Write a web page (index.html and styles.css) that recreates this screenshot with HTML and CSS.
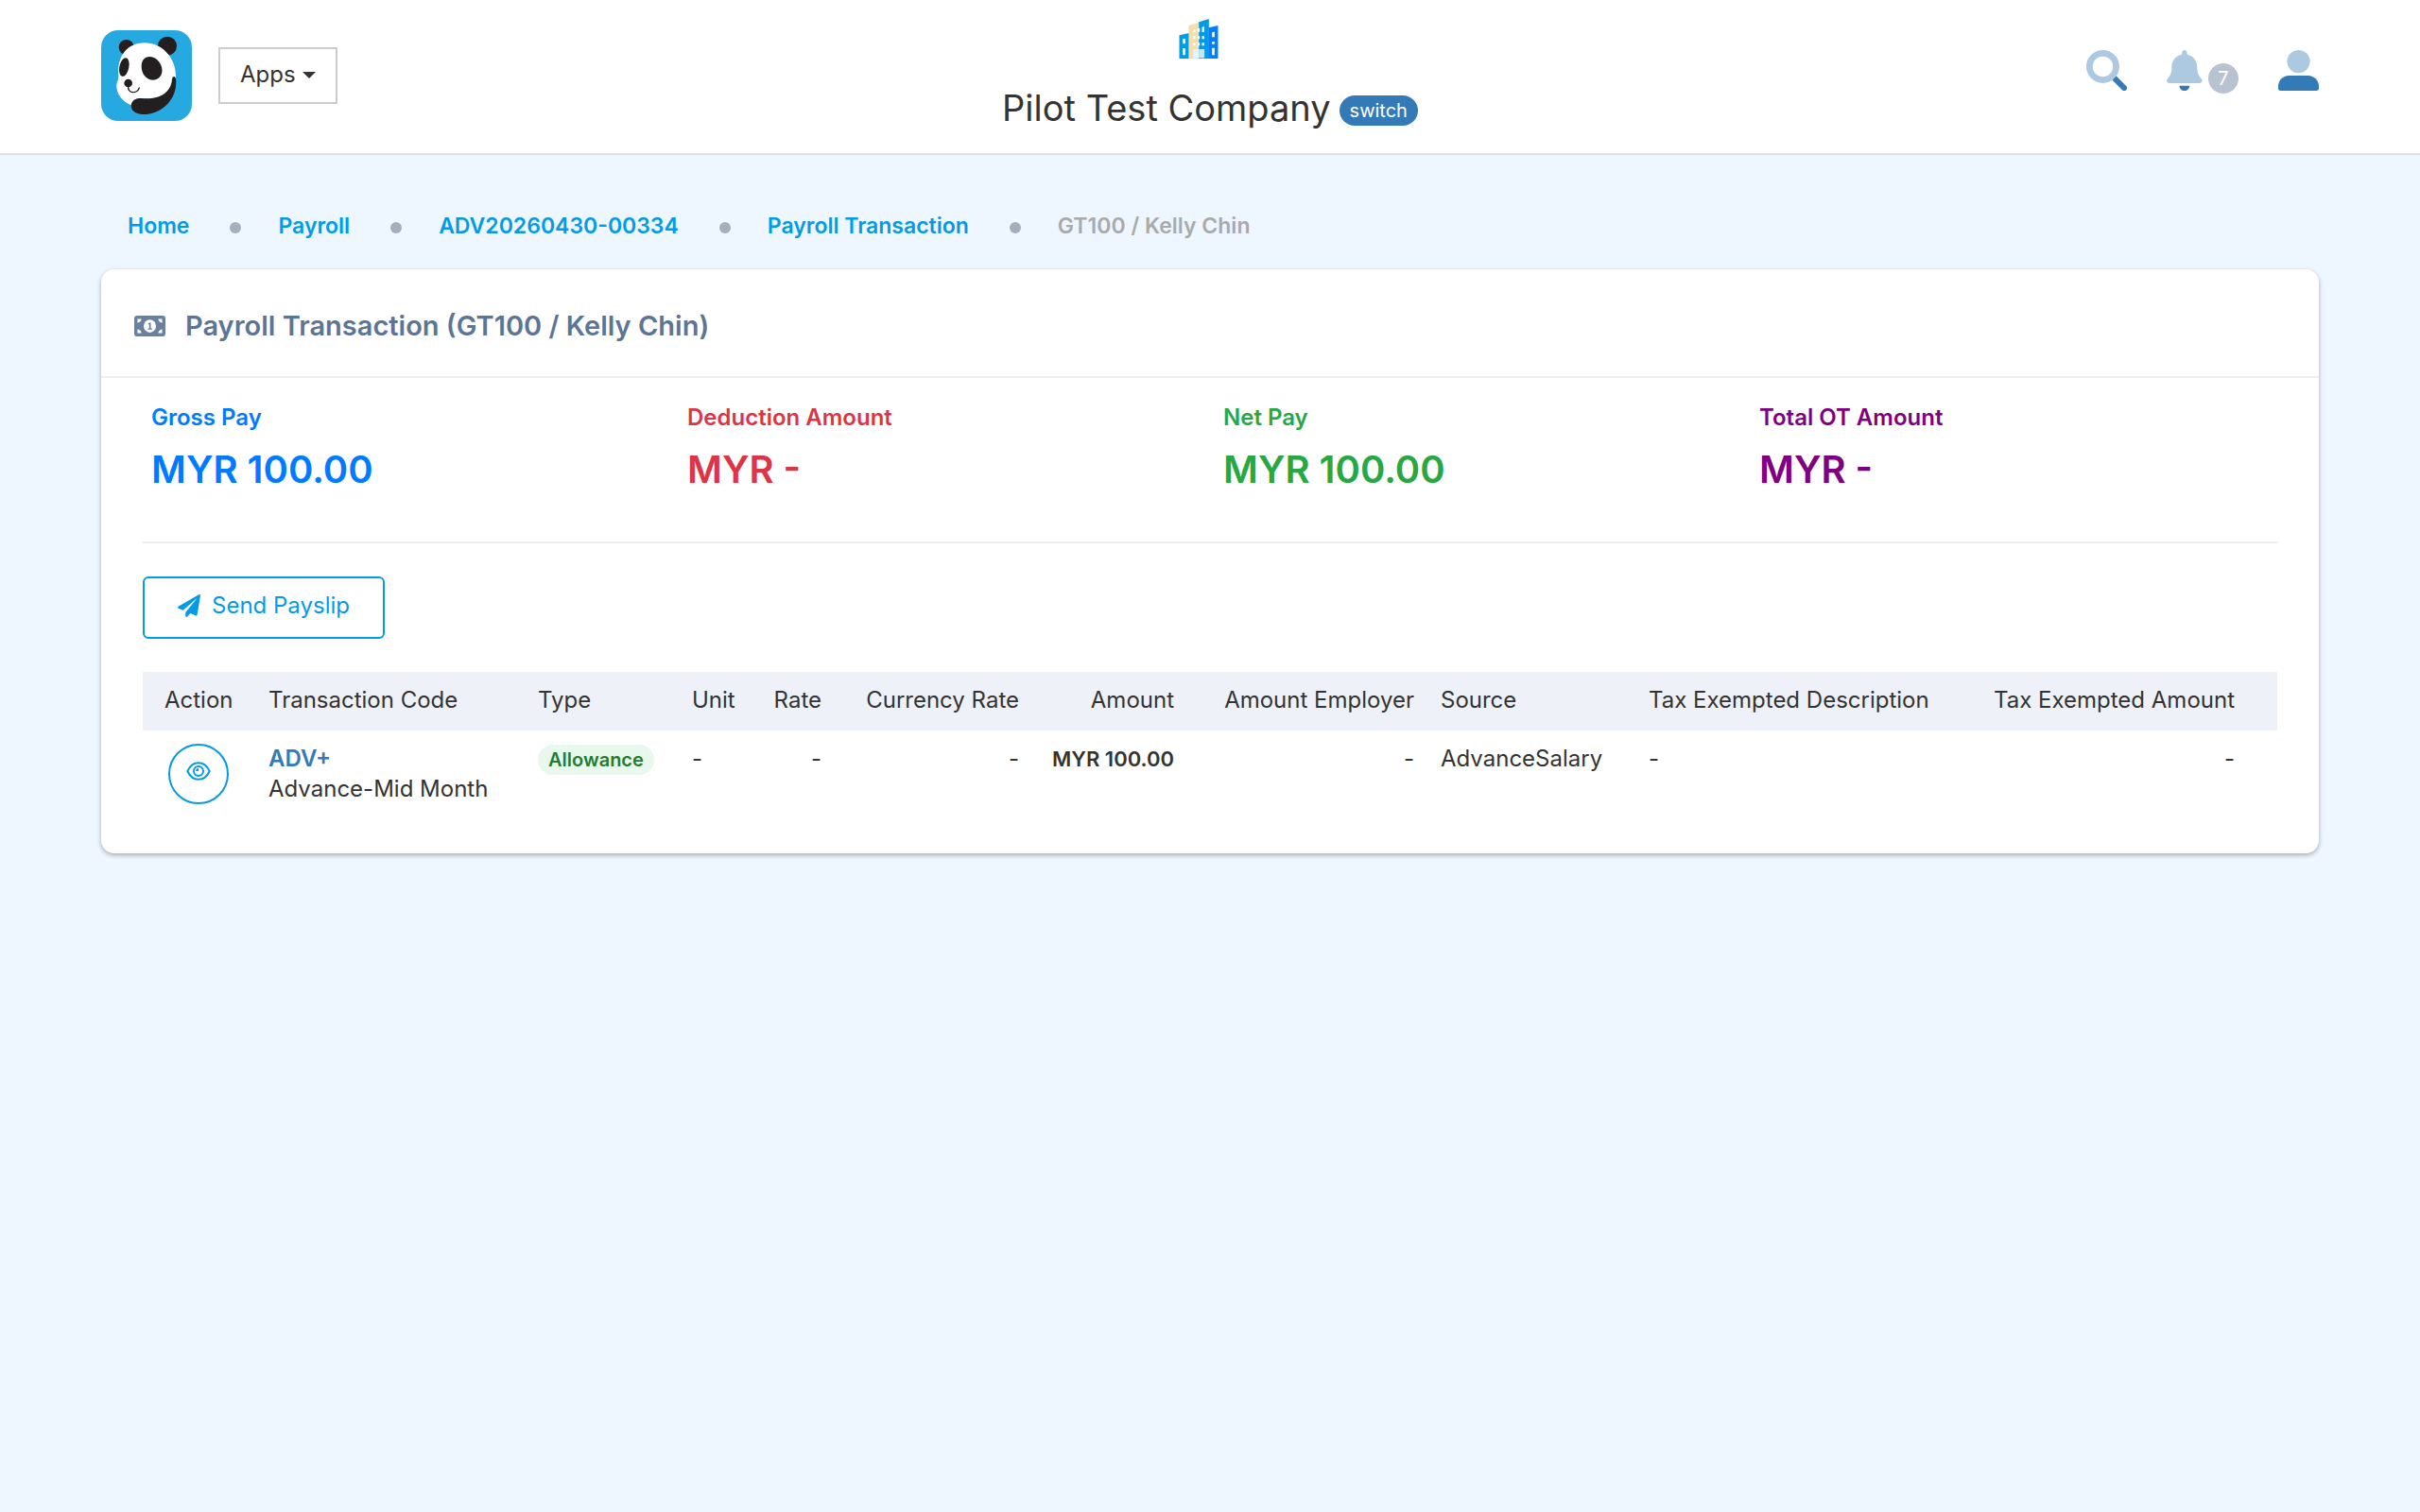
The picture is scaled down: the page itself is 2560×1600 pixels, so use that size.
FILE: index.html
```html
<!DOCTYPE html>
<html lang="en">
<head>
    <meta charset="UTF-8">
    <meta name="viewport" content="width=device-width, initial-scale=1.0">
    <title>Payroll Transaction</title>
    <link rel="stylesheet" href="styles.css">
</head>
<body>

    <header class="topbar">
        <div class="topbar-left">
            <a href="#" class="logo" aria-label="Dashboard">
                <svg viewBox="0 0 288 288">
                    <rect width="288" height="288" rx="54" fill="#26a9e1"/>
                    <g fill="#231f20">
                        <circle cx="80" cy="54" r="24"/>
                        <circle cx="210" cy="50" r="30"/>
                    </g>
                    <path d="M137 40C194 40 237 88 237 145C239 178 218 205 192 214C165 224 140 214 122 216C107 218 97 228 98 239C67 228 47 200 49 174C50 163 55 158 55 148C49 84 82 40 137 40z" fill="#fff"/>
                    <g fill="#231f20">
                        <ellipse cx="73" cy="117" rx="15" ry="30" transform="rotate(12 73 117)"/>
                        <path d="M128 112C130 78 163 78 180 96C205 124 193 158 163 158C142 157 127 138 128 112z"/>
                        <circle cx="86" cy="168" r="13"/>
                        <path d="M232 147C239 149 238 164 237 176C232 228 186 268 132 267C107 266 95 253 95 240C95 223 112 214 126 216C184 222 222 198 225 155C226 149 229 147 232 147z"/>
                    </g>
                    <path d="M86 176C82 202 114 203 121 183" fill="none" stroke="#231f20" stroke-width="4" stroke-linecap="round"/>
                </svg>
            </a>
            <button type="button" class="apps-btn">Apps <span class="caret"></span></button>
        </div>

        <div class="company">
            <svg class="company-icon" viewBox="0 0 123 126">
                <path d="M0 52l31-7v81H0z" fill="#039be5"/>
                <path d="M30 21l32-10v115H30z" fill="#f2dfac"/>
                <path d="M62 10l32-10v126H62z" fill="#039be5"/>
                <path d="M93 28l30-7v105H93z" fill="#0080ff"/>
                <path d="M44 96h18v28H44z" fill="#e8f3f4"/>
                <path d="M62 96h18v28H62z" fill="#c5e6ee"/>
                <g fill="#fff">
                    <path d="M11 64l8-2v17h-8zM11 93h8v22h-8z"/>
                    <path d="M44 35l7-2v9h-7zM44 55h7v9h-7zM44 76h7v9h-7zM58 31l7-2v12h-7zM58 55h7v9h-7zM58 76h7v9h-7z"/>
                    <path d="M72 26l7-2v18h-7zM72 55h7v9h-7zM72 76h7v9h-7z"/>
                    <path d="M104 43l8-2v17h-8zM104 72h8v8h-8zM104 92h8v23h-8z"/>
                </g>
            </svg>
            <div class="company-row">
                <span class="company-name">Pilot Test Company</span>
                <a href="#" class="switch">switch</a>
            </div>
        </div>

        <div class="topbar-right">
            <button type="button" class="icon-btn" aria-label="Search">
                <svg viewBox="0 0 512 512">
                    <path d="M362 362L477 477" stroke="#337ab7" stroke-width="70" stroke-linecap="round"/>
                    <circle cx="208" cy="208" r="168" fill="none" stroke="#adc9e2" stroke-width="80"/>
                </svg>
            </button>
            <button type="button" class="icon-btn bell" aria-label="Notifications">
                <svg viewBox="0 0 448 512">
                    <path fill="#adc9e2" d="M439.39 362.29c-19.32-20.76-55.47-51.99-55.47-154.29 0-77.7-54.48-139.9-127.94-155.16V32c0-17.67-14.32-32-31.98-32s-31.98 14.33-31.98 32v20.84C118.56 68.1 64.08 130.3 64.08 208c0 102.3-36.15 133.53-55.47 154.29-6 6.45-8.66 14.16-8.61 21.71.11 16.4 12.98 32 32.1 32h383.8c19.12 0 32-15.6 32.1-32 .05-7.55-2.61-15.27-8.61-21.71z"/>
                    <path fill="#337ab7" d="M224 512c35.32 0 63.97-28.65 63.97-64H160.03c0 35.35 28.65 64 63.97 64z"/>
                </svg>
                <span class="count">7</span>
            </button>
            <button type="button" class="icon-btn" aria-label="Account">
                <svg viewBox="0 0 512 512">
                    <circle cx="256" cy="144" r="144" fill="#adc9e2"/>
                    <path fill="#337ab7" d="M136 320h240c75 0 136 61 136 136v26c0 17-13 30-30 30H30c-17 0-30-13-30-30v-26c0-75 61-136 136-136z"/>
                </svg>
            </button>
        </div>
    </header>

    <main class="page">
        <nav aria-label="Breadcrumb">
            <ol class="breadcrumb">
                <li><a href="#">Home</a></li>
                <li><a href="#">Payroll</a></li>
                <li><a href="#">ADV20260430-00334</a></li>
                <li><a href="#">Payroll Transaction</a></li>
                <li>GT100 / Kelly Chin</li>
            </ol>
        </nav>

        <section class="card">
            <div class="card-header">
                <svg class="money-icon" viewBox="0 0 96 64">
                    <rect width="96" height="64" rx="9" fill="#6b7fa0"/>
                    <path d="M10 10h12a12 12 0 0 1-12 12zM86 10H74a12 12 0 0 0 12 12zM10 54h12A12 12 0 0 0 10 42zM86 54H74a12 12 0 0 1 12-12z" fill="#fff"/>
                    <ellipse cx="48" cy="32" rx="19" ry="20" fill="#fff"/>
                    <path d="M43 23l8-2v18h4v4H42v-4h4V27h-3z" fill="#6b7fa0"/>
                </svg>
                <h1>Payroll Transaction (GT100 / Kelly Chin)</h1>
            </div>

            <div class="card-body">
                <div class="totals">
                    <div class="total gross">
                        <div class="total-label">Gross Pay</div>
                        <div class="total-value">MYR 100.00</div>
                    </div>
                    <div class="total deduction">
                        <div class="total-label">Deduction Amount</div>
                        <div class="total-value">MYR -</div>
                    </div>
                    <div class="total net">
                        <div class="total-label">Net Pay</div>
                        <div class="total-value">MYR 100.00</div>
                    </div>
                    <div class="total overtime">
                        <div class="total-label">Total OT Amount</div>
                        <div class="total-value">MYR -</div>
                    </div>
                </div>

                <hr>

                <button type="button" class="payslip-btn">
                    <svg viewBox="0 0 512 512"><path fill="currentColor" d="M476 3.2L12.5 270.6c-18.1 10.4-15.8 35.6 2.2 43.2L121 358.4l287.3-253.2c5.5-4.9 13.3 2.6 8.6 8.3L176 407v80.5c0 23.6 28.5 32.9 42.5 15.8L282 426l124.6 52.2c14.2 6 30.4-2.9 33-18.2l72-432C515 7.8 493.3-6.8 476 3.2z"/></svg>
                    Send Payslip
                </button>

                <table class="transactions">
                    <colgroup>
                        <col class="c-action">
                        <col class="c-code">
                        <col class="c-type">
                        <col class="c-unit">
                        <col class="c-rate">
                        <col class="c-currency">
                        <col class="c-amount">
                        <col class="c-employer">
                        <col class="c-source">
                        <col class="c-description">
                        <col>
                    </colgroup>
                    <thead>
                        <tr>
                            <th>Action</th>
                            <th>Transaction Code</th>
                            <th>Type</th>
                            <th>Unit</th>
                            <th class="num">Rate</th>
                            <th class="num">Currency Rate</th>
                            <th class="num">Amount</th>
                            <th class="num">Amount Employer</th>
                            <th>Source</th>
                            <th>Tax Exempted Description</th>
                            <th class="num">Tax Exempted Amount</th>
                        </tr>
                    </thead>
                    <tbody>
                        <tr>
                            <td>
                                <button type="button" class="view-btn" aria-label="View">
                                    <svg viewBox="0 0 78 60" fill="none" stroke="currentColor" stroke-width="6">
                                        <path d="M4 30C20 -5 58 -5 74 30C58 65 20 65 4 30z" stroke-linejoin="round"/>
                                        <circle cx="39" cy="30" r="15"/>
                                        <path d="M39 30H30C30 25 34 21 39 21z" fill="currentColor" stroke="none"/>
                                    </svg>
                                </button>
                            </td>
                            <td><a href="#" class="code">ADV+</a><br>Advance-Mid Month</td>
                            <td><span class="tag">Allowance</span></td>
                            <td>-</td>
                            <td class="num">-</td>
                            <td class="num">-</td>
                            <td class="num"><b>MYR 100.00</b></td>
                            <td class="num">-</td>
                            <td>AdvanceSalary</td>
                            <td>-</td>
                            <td class="num">-</td>
                        </tr>
                    </tbody>
                </table>
            </div>
        </section>
    </main>

</body>
</html>
```
FILE: styles.css
```css
* {
    box-sizing: border-box;
}
body {
    margin: 0;
    background: #eef6ff;
    color: #333;
    font-family: Inter, "Open Sans", sans-serif;
    font-size: 24px;
    line-height: 32px;
}
a {
    text-decoration: none;
}
button {
    font: inherit;
    cursor: pointer;
}
svg {
    display: block;
}

/* top bar */
.topbar {
    display: grid;
    grid-template-columns: 1fr auto 1fr;
    padding: 0 107px;
    min-height: 164px;
    background: #fff;
    border-bottom: 2px solid #e0e0e0;
}
.topbar-left {
    display: flex;
    align-items: center;
    gap: 28px;
    padding-bottom: 2px;
}
.logo svg {
    width: 96px;
    height: 96px;
}
.apps-btn {
    display: flex;
    align-items: center;
    gap: 7px;
    height: 60px;
    padding: 0 21px 2px;
    border: 2px solid #ccc;
    background: #fff;
    color: #333;
}
.caret {
    border: 7px solid transparent;
    border-top-color: #333;
    border-bottom: 0;
}
.company {
    padding-top: 20px;
}
.company-icon {
    width: 66px;
    height: 42px;
    margin: 0 auto 28px;
    padding-right: 24px;
}
.company-row {
    display: flex;
    align-items: center;
    gap: 9px;
    line-height: 48px;
}
.company-name {
    font-size: 38px;
}
.switch {
    margin-top: 6px;
    padding: 0 11px;
    border-radius: 16px;
    background: #337ab7;
    color: #fff;
    font-size: 20px;
    line-height: 32px;
}
.topbar-right {
    display: flex;
    justify-content: flex-end;
    align-items: flex-start;
    gap: 42px;
    padding-top: 53px;
}
.icon-btn {
    display: flex;
    padding: 0;
    border: 0;
    background: none;
}
.icon-btn svg {
    height: 43px;
}
.bell {
    gap: 6px;
}
.count {
    width: 32px;
    margin-top: 14px;
    border-radius: 50%;
    background: #b9c2d0;
    color: #fff;
    font-size: 20px;
    line-height: 32px;
}

/* page */
.page {
    padding: 58px 107px;
}
.breadcrumb {
    display: flex;
    margin: 0 0 29px;
    padding: 0 0 0 28px;
    list-style: none;
    color: #aaa;
    font-size: 23px;
    font-weight: 600;
    line-height: 34px;
}
.breadcrumb li {
    display: flex;
    align-items: center;
}
.breadcrumb li + li::before {
    content: "";
    width: 12px;
    height: 12px;
    margin: 4px 39px 0 43px;
    border-radius: 50%;
    background: #a4afbd;
}
.breadcrumb a {
    color: #039be5;
}
.card {
    border-radius: 14px;
    background: #fff;
    box-shadow: 0 2px 5px rgba(0, 0, 0, 0.3);
}
.card-header {
    display: flex;
    align-items: center;
    gap: 21px;
    height: 115px;
    padding: 6px 35px 0;
    border-bottom: 2px solid #eee;
}
.money-icon {
    width: 33px;
    height: 22px;
}
h1 {
    margin: 0;
    color: #5d7595;
    font-size: 29px;
    font-weight: 600;
}
.card-body {
    padding: 24px 44px 40px;
}

/* totals */
.totals {
    display: grid;
    grid-template-columns: repeat(4, 1fr);
    margin-right: -19px;
    padding-left: 9px;
}
.total-label {
    font-weight: 600;
    line-height: 36px;
}
.total-value {
    font-size: 40px;
    font-weight: 600;
    line-height: 74px;
}
.gross {
    color: #007bff;
}
.deduction {
    color: #dc3545;
}
.net {
    color: #28a745;
}
.overtime {
    color: purple;
}
hr {
    margin: 39px 0 35px;
    border: 0;
    border-top: 2px solid #eee;
}

.payslip-btn {
    display: flex;
    align-items: center;
    gap: 12px;
    height: 66px;
    padding: 0 35px 4px;
    border: 2px solid #039be5;
    border-radius: 6px;
    background: #fff;
    color: #039be5;
}
.payslip-btn svg {
    width: 24px;
    height: 24px;
}

/* transaction table */
.transactions {
    width: 100%;
    margin-top: 35px;
    border-collapse: collapse;
    table-layout: fixed;
}
.c-action {
    width: 119px;
}
.c-code {
    width: 285px;
}
.c-type {
    width: 163px;
}
.c-unit {
    width: 85px;
}
.c-rate {
    width: 80px;
}
.c-currency {
    width: 209px;
}
.c-amount {
    width: 164px;
}
.c-employer {
    width: 254px;
}
.c-source {
    width: 220px;
}
.c-description {
    width: 340px;
}
.transactions th {
    height: 62px;
    padding: 0 14px 2px;
    background: #eef1f7;
    font-weight: 400;
    text-align: left;
    white-space: nowrap;
}
.transactions td {
    padding: 14px 14px 12px;
    vertical-align: top;
    white-space: nowrap;
}
.transactions .num {
    text-align: right;
}
.transactions th:first-child {
    padding-left: 23px;
}
.transactions td:first-child {
    padding-left: 27px;
}
.transactions th:last-child,
.transactions td:last-child {
    padding-right: 45px;
}
.transactions b {
    font-size: 22px;
    font-weight: 600;
}
.view-btn {
    display: flex;
    justify-content: center;
    width: 64px;
    height: 64px;
    padding: 17px 0 0;
    border: 2px solid #039be5;
    border-radius: 50%;
    background: #fff;
    color: #039be5;
}
.view-btn svg {
    width: 26px;
    height: 20px;
}
.code {
    color: #337ab7;
    font-weight: 600;
}
.tag {
    display: inline-block;
    padding: 0 11px;
    border-radius: 16px;
    background: #e8f8ec;
    color: #1e7e34;
    font-size: 20px;
    font-weight: 600;
}
```
